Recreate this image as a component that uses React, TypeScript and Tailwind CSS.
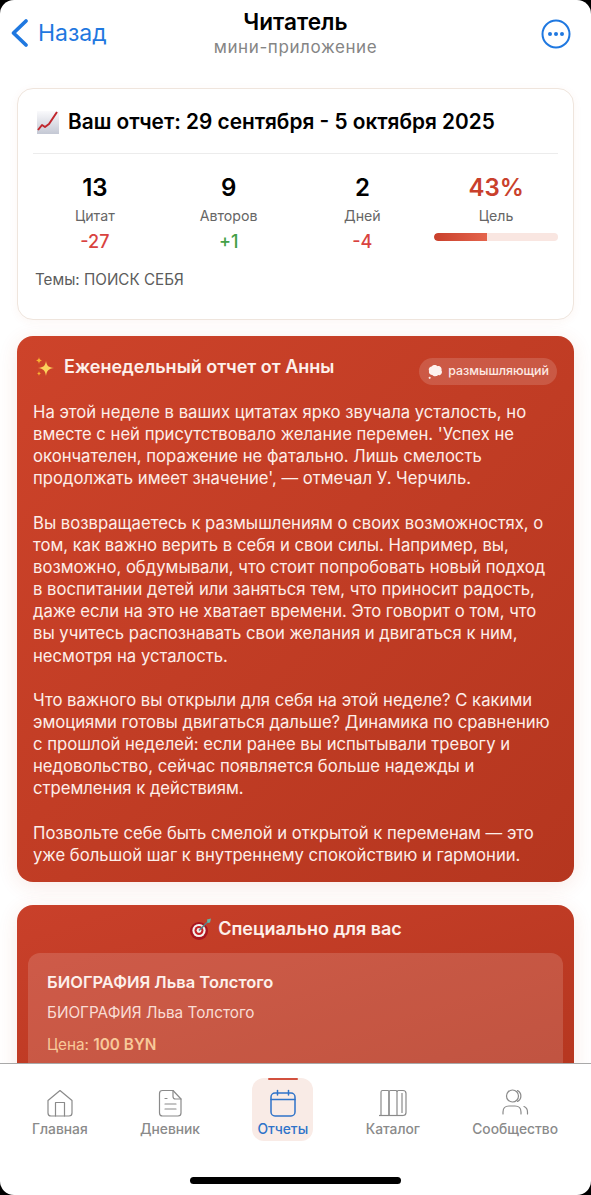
import type { ReactNode } from "react";

const font = { fontFamily: "Inter, 'Noto Sans', sans-serif" };

const stats = [
  { value: "13", label: "Цитат", delta: "-27", deltaColor: "text-[#d9433f]" },
  { value: "9", label: "Авторов", delta: "+1", deltaColor: "text-[#43a047]" },
  { value: "2", label: "Дней", delta: "-4", deltaColor: "text-[#d9433f]" },
];

const paragraphs = [
  "На этой неделе в ваших цитатах ярко звучала усталость, но вместе с ней присутствовало желание перемен. 'Успех не окончателен, поражение не фатально. Лишь смелость продолжать имеет значение', — отмечал У. Черчиль.",
  "Вы возвращаетесь к размышлениям о своих возможностях, о том, как важно верить в себя и свои силы. Например, вы, возможно, обдумывали, что стоит попробовать новый подход в воспитании детей или заняться тем, что приносит радость, даже если на это не хватает времени. Это говорит о том, что вы учитесь распознавать свои желания и двигаться к ним, несмотря на усталость.",
  "Что важного вы открыли для себя на этой неделе? С какими эмоциями готовы двигаться дальше? Динамика по сравнению с прошлой неделей: если ранее вы испытывали тревогу и недовольство, сейчас появляется больше надежды и стремления к действиям.",
  "Позвольте себе быть смелой и открытой к переменам — это уже большой шаг к внутреннему спокойствию и гармонии.",
];

function ChartEmoji() {
  return (
    <svg width="24" height="24" viewBox="0 0 24 24" className="shrink-0">
      <defs>
        <linearGradient id="chartBg" x1="0" y1="0" x2="0" y2="1">
          <stop offset="0" stopColor="#fafafc" />
          <stop offset="1" stopColor="#c4c8d4" />
        </linearGradient>
      </defs>
      <rect x="1" y="1" width="22" height="23" fill="url(#chartBg)" />
      <path d="M2 20 L6 15 L9 17 L13 14 L21 2" fill="none" stroke="#c0272d" strokeWidth="2" strokeLinejoin="round" />
    </svg>
  );
}

function SparklesEmoji() {
  return (
    <svg width="20" height="22" viewBox="0 0 20 22" className="shrink-0">
      <path d="M11 5 C11.8 10 13.5 11.4 19 12 C13.5 12.8 11.8 14.4 11 20 C10.2 14.4 8.5 12.8 3 12 C8.5 11.4 10.2 10 11 5Z" fill="#fbd25c" />
      <path d="M4 1 C4.3 3.2 5 4 7 4.4 C5 4.8 4.3 5.6 4 8 C3.7 5.6 3 4.8 1 4.4 C3 4 3.7 3.2 4 1Z" fill="#f9b233" />
      <path d="M4 15 C4.2 16.6 4.8 17.2 6.2 17.5 C4.8 17.8 4.2 18.4 4 20 C3.8 18.4 3.2 17.8 1.8 17.5 C3.2 17.2 3.8 16.6 4 15Z" fill="#f9b233" />
    </svg>
  );
}

function BalloonEmoji() {
  return (
    <svg width="16" height="16" viewBox="0 0 15 15" className="shrink-0">
      <path d="M4 2.5 C5.5 0.5 8.5 0.6 9.8 2 C12.2 1.6 14.3 3.8 13.6 6 C15 8 13 11 10.5 10.4 C9 12 6 11.8 5 10.2 C2.8 10.4 1.2 8.5 2 6.4 C1 4.6 2.4 2.4 4 2.5Z" fill="#fdf1ee" />
      <circle cx="2.5" cy="13" r="1" fill="#fdf1ee" />
    </svg>
  );
}

function TargetEmoji() {
  return (
    <svg width="24" height="24" viewBox="0 0 24 24" className="shrink-0">
      <circle cx="10" cy="14" r="9" fill="#a8161f" />
      <circle cx="10" cy="13.5" r="6.6" fill="#f4f1ee" />
      <circle cx="10" cy="13.5" r="4.5" fill="#c62127" />
      <circle cx="10" cy="13.5" r="2.4" fill="#f4f1ee" />
      <path d="M10 13.5 L19 4.5" stroke="#5b7f86" strokeWidth="1.6" />
      <path d="M18 2.5 L22 1.5 L21 5.5 L18.5 6 Z" fill="#5fb7a8" />
    </svg>
  );
}

// tab bar icons are thin outlines that no package has in this exact shape
function TabIcon({ children }: { children: ReactNode }) {
  return (
    <svg width="30" height="30" viewBox="0 0 30 30" fill="none" stroke="currentColor" strokeWidth="1.2" strokeLinecap="round" strokeLinejoin="round">
      {children}
    </svg>
  );
}

const homeIcon = (
  <TabIcon>
    <path d="M3 12.5 L15 2.5 L27 12.5 V25 Q27 28 24 28 H6 Q3 28 3 25 Z" />
    <path d="M10.5 28 V14.5 H19.5 V28" />
  </TabIcon>
);

const diaryIcon = (
  <TabIcon>
    <path d="M7.5 2.5 H18 L26 11 V25 Q26 28 23 28 H7.5 Q4.5 28 4.5 25 V5.5 Q4.5 2.5 7.5 2.5 Z" />
    <path d="M18 2.5 V8.5 Q18 11 20.5 11 H26" />
    <path d="M10 10.5 H12" />
    <path d="M10 16 H21" />
    <path d="M10 21 H21" />
  </TabIcon>
);

const reportIcon = (
  <TabIcon>
    <rect x="3" y="5" width="24" height="23" rx="4" strokeWidth="1.5" />
    <path d="M3 11.5 H27" strokeWidth="1.5" />
    <path d="M9.5 2.5 V7" strokeWidth="1.5" />
    <path d="M20.5 2.5 V7" strokeWidth="1.5" />
  </TabIcon>
);

const catalogIcon = (
  <svg width="30" height="30" viewBox="0 0 30 30" fill="none" stroke="currentColor" strokeWidth="1.2" strokeLinejoin="round">
    <path d="M3 27.5 V4 Q3 2.5 4.5 2.5 H10 Q11 2.5 11 4 V27.5" />
    <path d="M11 27.5 V4 Q11 2.5 12.5 2.5 H18 Q19 2.5 19 4 V27.5" />
    <path d="M19 4 Q19 2.5 20.5 2.5 H25 Q28 2.5 28 5.5 V24.5 Q28 27.5 25 27.5 H19" />
    <path d="M24 5 V25" />
    <path d="M1 27.5 H25" />
  </svg>
);

const communityIcon = (
  <TabIcon>
    <circle cx="12.5" cy="8" r="6" />
    <path d="M17.5 2.6 A6 6 0 0 1 17.5 13.4" />
    <path d="M3 26 V24 Q3 18 9 18 H15 Q21 18 21 24 V26" />
    <path d="M24 18.5 Q27.5 20 27.5 24 V26" />
  </TabIcon>
);

function NavItem({ icon, label, active }: { icon: ReactNode; label: string; active?: boolean }) {
  return (
    <div
      className={
        active
          ? "relative flex h-[63px] w-[61px] flex-col items-center rounded-[12px] bg-[#f9ebe6] pt-[10px] text-[#2f73c9]"
          : "flex h-[63px] flex-col items-center pt-[10px] text-[#8a8a8a]"
      }
    >
      {active && <span className="absolute top-0 h-[2px] w-[30px] rounded-full bg-[#d2503e]" />}
      {icon}
      <span className="mt-[2px] text-[13.8px] leading-[18px] font-medium">{label}</span>
    </div>
  );
}

export default function App() {
  return (
    <div style={font} className="relative flex h-[1195px] w-[591px] flex-col overflow-hidden bg-white">
      <header className="grid h-[68px] shrink-0 grid-cols-[1fr_auto_1fr] items-start bg-white px-[10px]">
        <div className="mt-[18px] flex items-center gap-[8px] text-[#1f78e0]">
          <svg width="20" height="30" viewBox="0 0 20 30" fill="none">
            <path d="M16 3 L3.5 15 L16 27" stroke="currentColor" strokeWidth="3.8" strokeLinecap="round" strokeLinejoin="round" />
          </svg>
          <span className="text-[23px] leading-[30px]">Назад</span>
        </div>
        <div className="mt-[8px] flex flex-col items-center">
          <span className="text-[22.6px] leading-[28px] font-semibold text-black">Читатель</span>
          <span className="text-[17px] leading-[22px] tracking-[0.6px] text-[#858585]">мини-приложение</span>
        </div>
        <svg width="30" height="30" viewBox="0 0 30 30" fill="none" className="mt-[19px] mr-[10px] justify-self-end text-[#1f78e0]">
          <circle cx="15" cy="15" r="13.5" stroke="currentColor" strokeWidth="2" />
          <circle cx="9" cy="15" r="2" fill="currentColor" />
          <circle cx="15" cy="15" r="2" fill="currentColor" />
          <circle cx="21" cy="15" r="2" fill="currentColor" />
        </svg>
      </header>

      <main className="flex min-h-0 flex-1 flex-col overflow-hidden px-[17px] pt-[20px]">
        <section className="h-[232px] shrink-0 rounded-[16px] border border-[#efe5dd] bg-white px-[15px] pt-[17px] shadow-[0_2px_10px_rgba(200,70,40,0.05)]">
          <h2 className="flex items-center gap-[8px] border-b border-[#ececec] pb-[15px] pl-[3px] text-[20.8px] leading-[32px] font-semibold text-black">
            <ChartEmoji />
            Ваш отчет: 29 сентября - 5 октября 2025
          </h2>
          <div className="grid grid-cols-4 gap-[10px] pt-[20px]">
            {stats.map((stat) => (
              <div key={stat.label} className="flex flex-col items-center">
                <span className="text-[24px] leading-[28px] font-semibold text-black">{stat.value}</span>
                <span className="mt-[4px] text-[14.2px] leading-[20px] text-[#666666]">{stat.label}</span>
                <span className={`mt-[4px] text-[18px] leading-[24px] font-medium ${stat.deltaColor}`}>{stat.delta}</span>
              </div>
            ))}
            <div className="flex flex-col items-center">
              <span className="text-[24px] leading-[28px] font-semibold text-[#c9402c]">43%</span>
              <span className="mt-[4px] text-[14.2px] leading-[20px] text-[#666666]">Цель</span>
              <div className="mt-[7px] h-[8px] w-full overflow-hidden rounded-full bg-[#f9e6e1]">
                <div className="h-full w-[43%] rounded-l-full bg-linear-to-r from-[#c9402c] to-[#e4644c]" />
              </div>
            </div>
          </div>
          <p className="mt-[16px] pl-[2px] text-[15.2px] leading-[20px] text-[#5c5c5c]">Темы: ПОИСК СЕБЯ</p>
        </section>

        <section className="mt-[16px] shrink-0 rounded-[16px] bg-linear-to-br from-[#cd432a] to-[#b5361f] px-[16px] pt-[17px] pb-[16px] shadow-[0_4px_20px_rgba(200,70,40,0.12)]">
          <div className="flex items-start justify-between">
            <h2 className="flex items-center gap-[9px] pt-[1px] pl-[2px] text-[18px] leading-[26px] font-semibold text-[#fdf0eb]">
              <SparklesEmoji />
              Еженедельный отчет от Анны
            </h2>
            <span className="mt-[5px] mr-[1px] flex h-[27px] items-center gap-[5px] rounded-full bg-white/15 pr-[8px] pl-[8px] text-[12.4px] font-medium text-[#fdeae4]">
              <BalloonEmoji />
              размышляющий
            </span>
          </div>
          <div className="mt-[16px] flex flex-col gap-[22px] text-[16.67px] leading-[22.15px] text-[#fdeee9]">
            {paragraphs.map((text) => (
              <p key={text.slice(0, 12)}>{text}</p>
            ))}
          </div>
        </section>

        <section className="mt-[23px] shrink-0 rounded-[16px] bg-linear-to-br from-[#c9402a] to-[#b5361f] px-[11px] pt-[11px] pb-[11px] shadow-[0_4px_20px_rgba(200,70,40,0.12)]">
          <h2 className="flex items-center justify-center gap-[5px] text-[18px] leading-[26px] font-semibold text-[#fdf0eb]">
            <TargetEmoji />
            Специально для вас
          </h2>
          <div className="mt-[11px] rounded-[12px] bg-white/15 px-[19px] pt-[17px] pb-[20px]">
            <h3 className="text-[16.5px] leading-[24px] font-semibold text-[#fdf0eb]">БИОГРАФИЯ Льва Толстого</h3>
            <p className="mt-[8px] text-[15.3px] leading-[22px] text-[#f9ddd5]">БИОГРАФИЯ Льва Толстого</p>
            <p className="mt-[10px] text-[15.3px] leading-[22px] text-[#f8c99a]">
              Цена: <span className="font-semibold">100 BYN</span>
            </p>
          </div>
        </section>
      </main>

      <nav className="h-[132px] shrink-0 border-t border-[#a9a9a9] bg-white">
        <div className="flex items-start justify-between pt-[14px] pr-[33px] pl-[32px]">
          <NavItem label="Главная" icon={homeIcon} />
          <NavItem label="Дневник" icon={diaryIcon} />
          <NavItem label="Отчеты" active icon={reportIcon} />
          <NavItem label="Каталог" icon={catalogIcon} />
          <NavItem label="Сообщество" icon={communityIcon} />
        </div>
      </nav>

      {/* home indicator and the rounded screen corners lie over everything */}
      <div className="absolute bottom-[11px] left-[190px] h-[7px] w-[211px] rounded-full bg-black" />
      <div className="pointer-events-none absolute inset-0 rounded-[14px] shadow-[0_0_0_14px_#000]" />
    </div>
  );
}
